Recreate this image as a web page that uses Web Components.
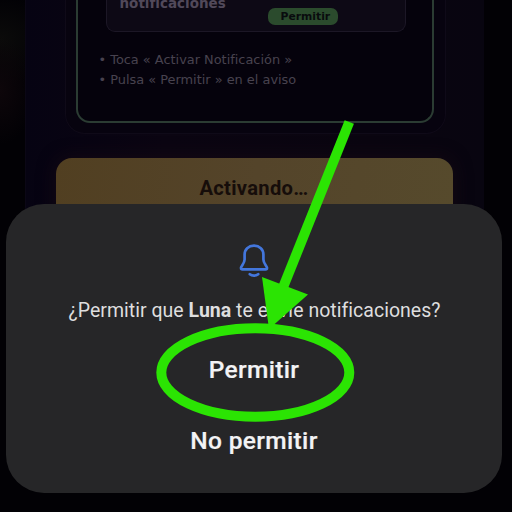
<!DOCTYPE html>
<html lang="es">
<head>
<meta charset="utf-8">
<title>Permitir notificaciones</title>
<style>
html,body{margin:0;width:512px;height:512px;overflow:hidden;background:#020105}
</style>
</head>
<body>
<permission-screen></permission-screen>
<script>
const define = (name, html) => customElements.define(name, class extends HTMLElement {
  constructor() {
    super();
    this.attachShadow({ mode: 'open' }).innerHTML = html;
  }
});

define('allow-pill', `
<style>
:host{display:block;box-sizing:border-box;width:70px;height:17px;border-radius:7px;background:#2b4b2d;color:#090b0e;
font:bold 10.8px/18px "DejaVu Sans",sans-serif;padding-left:13px;white-space:nowrap}
</style><span><slot></slot></span>`);

define('notice-preview', `
<style>
:host{display:flex;box-sizing:border-box;width:300px;height:32px;border:1.5px solid #1c1726;border-top:0;border-radius:0 0 9px 9px;
background:#0d0915;align-items:flex-start;justify-content:space-between;padding:0 67px 0 13px;color:#51495a;
font:bold 13.5px/16px "DejaVu Sans",sans-serif}
.t{margin-top:-5px;white-space:nowrap}
.p{margin-top:8px}
</style><div class="t"><slot></slot></div><div class="p"><slot name="action"></slot></div>`);

define('step-list', `
<style>
:host{display:block;color:#48424f;font:12.9px/20px "DejaVu Sans",sans-serif;padding:18px 0 0 21px}
::slotted(div){white-space:nowrap}
</style><slot></slot>`);

define('guide-card', `
<style>
:host{display:block;flex:none;box-sizing:border-box;width:381px;height:134px;border:1px solid #0f0a18;border-top:0;border-radius:0 0 20px 20px;padding:0 11px 0 10px;background:#07030f}
.in{box-sizing:border-box;height:123px;border:2px solid #2b3c33;border-top:0;border-radius:0 0 14px 14px;background:#05020c}
.box{margin-left:28px}
</style><div class="in"><div class="box"><slot name="preview"></slot></div><slot></slot></div>`);

define('gold-button', `
<style>
:host{display:block;flex:none;box-sizing:border-box;width:397px;height:60px;border-radius:16px 16px 0 0;text-align:center;
background:linear-gradient(100deg,#513f21,#54442a 50%,#564a2c);color:#160d0a;font:bold 20.2px/60px Roboto,sans-serif;
box-shadow:0 0 18px #150913}
span{letter-spacing:.3px}
</style><span><slot></slot></span>`);

define('bell-icon', `
<style>:host{display:block;width:32px;height:36px}svg{display:block}</style>
<svg width="32" height="36" viewBox="0 0 32 36" fill="none" stroke="#4376dc" stroke-width="2.7" stroke-linejoin="round" stroke-linecap="round">
<path d="M16 2.7C10.4 2.7 6.6 6.3 6.6 11.5V16.5C6.6 20.4 3 23.2 3 25.1C3 26 3.5 26.4 4.4 26.4H27.6C28.5 26.4 29 26 29 25.1C29 23.2 25.4 20.4 25.4 16.5V11.5C25.4 6.3 21.6 2.7 16 2.7Z"/>
<path d="M11.8 31.2C14 33 18 33 20.2 31.2"/></svg>`);

define('dialog-action', `
<style>
:host{display:block;height:71px;text-align:center}
button{all:unset;color:#f3f3f5;font:500 24.5px/71px Roboto,sans-serif;letter-spacing:.35px;white-space:nowrap;-webkit-text-stroke:.2px #f3f3f5}
</style><button><slot></slot></button>`);

define('permission-dialog', `
<style>
:host{display:flex;box-sizing:border-box;flex-direction:column;align-items:center;width:496px;height:289px;
border-radius:38px;background:#262628;padding-top:39px}
.q{margin-top:16px;height:32px;font:400 19.5px/32px Roboto,sans-serif;letter-spacing:.02px;color:#dededf;white-space:nowrap;padding-left:1px}
.a{margin-top:7px}
</style><bell-icon></bell-icon><div class="q"><slot></slot></div><div class="a"><slot name="actions"></slot></div>`);

define('pointer-mark', `
<style>:host{display:block;position:absolute;inset:0;pointer-events:none}svg{display:block}</style>
<svg width="512" height="512" viewBox="0 0 512 512">
<path d="M349.3 122L282 290" fill="none" stroke="#2be403" stroke-width="10"/>
<path d="M262 277L308 294.5L269 329Z" fill="#2be403"/>
<ellipse cx="255.3" cy="372.5" rx="94" ry="44.3" fill="none" stroke="#2be403" stroke-width="10"/></svg>`);

define('permission-screen', `
<style>
:host{display:block;position:relative;width:512px;height:512px;overflow:hidden;
background:radial-gradient(ellipse 35px 55px at 0 90px,#0d060a,transparent),radial-gradient(ellipse 55px 45px at 0 40px,#0b0b0a,transparent),#020105}
.page{box-sizing:border-box;margin:0 28px 0 25px;height:240px;overflow:hidden;padding-left:39px;border-left:1px solid #0b0715;
background:linear-gradient(90deg,#060312,#0b0512 30%,#0a0510 75%,#080510);display:flex;flex-direction:column}
guide-card{margin-left:-.5px}
gold-button{margin:24px 0 0 -9.5px}
.sheet{position:absolute;left:6px;top:204px}
</style>
<div class="page">
<guide-card><notice-preview slot="preview">notificaciones<allow-pill slot="action">Permitir</allow-pill></notice-preview>
<step-list><div>• Toca « Activar Notificación »</div><div>• Pulsa « Permitir » en el aviso</div></step-list></guide-card>
<gold-button>Activando…</gold-button>
</div>
<permission-dialog class="sheet">¿Permitir que <b>Luna</b> te envíe notificaciones?
<dialog-action slot="actions">Permitir</dialog-action><dialog-action slot="actions">No permitir</dialog-action></permission-dialog>
<pointer-mark></pointer-mark>`);
</script>
</body>
</html>
